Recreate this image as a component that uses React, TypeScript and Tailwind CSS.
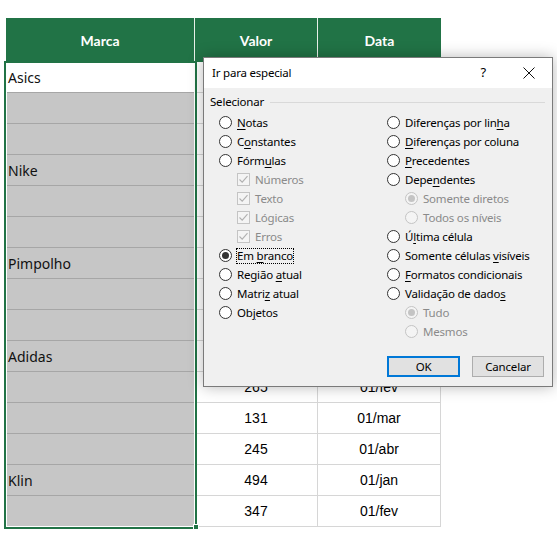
import React from "react";

const marca: Record<number, string> = { 0: "Asics", 3: "Nike", 6: "Pimpolho", 9: "Adidas", 13: "Klin" };
const vals: Record<number, [string, string]> = {
  10: ["265", "01/fev"],
  11: ["131", "01/mar"],
  12: ["245", "01/abr"],
  13: ["494", "01/jan"],
  14: ["347", "01/fev"],
};

function Radio({ checked = false, disabled = false }: { checked?: boolean; disabled?: boolean }) {
  return (
    <span
      className={
        disabled
          ? "flex h-[13px] w-[13px] shrink-0 items-center justify-center rounded-full border border-[#c4c4c4] bg-[#f4f4f4]"
          : "flex h-[13px] w-[13px] shrink-0 items-center justify-center rounded-full border border-[#333333] bg-white"
      }
    >
      {checked && (
        <span className={disabled ? "h-[7px] w-[7px] rounded-full bg-[#c4c4c4]" : "h-[7px] w-[7px] rounded-full bg-[#333333]"} />
      )}
    </span>
  );
}

function Check() {
  return (
    <span className="flex h-[13px] w-[13px] shrink-0 items-center justify-center border border-[#c4c4c4] bg-[#f4f4f4]">
      <svg width="11" height="11" viewBox="0 0 11 11" fill="none">
        <path d="M1.5 5.5 L4.2 8.2 L9.5 2.2" stroke="#b0b0b0" strokeWidth="1.1" />
      </svg>
    </span>
  );
}

function U({ children }: { children: React.ReactNode }) {
  return <span className="underline decoration-1 underline-offset-[2px]">{children}</span>;
}

function Item({
  indent = false,
  kind = "radio",
  checked = false,
  disabled = false,
  focus = false,
  children,
}: {
  indent?: boolean;
  kind?: "radio" | "check";
  checked?: boolean;
  disabled?: boolean;
  focus?: boolean;
  children: React.ReactNode;
}) {
  return (
    <div className={indent ? "flex h-[19px] items-center gap-[4px] pl-[18px]" : "flex h-[19px] items-center gap-[4px]"}>
      {kind === "radio" ? <Radio checked={checked} disabled={disabled} /> : <Check />}
      <span
        className={
          (disabled ? "text-[#8a8a8a] " : "text-black ") +
          (focus ? "border border-dotted border-black leading-[14px]" : "border border-transparent leading-[14px]")
        }
      >
        {children}
      </span>
    </div>
  );
}

export default function App() {
  const rows = Array.from({ length: 15 }, (_, i) => i);
  return (
    <div className="relative h-[534px] w-[557px] overflow-hidden bg-white" style={{ fontFamily: "'Noto Sans', sans-serif" }}>
      {/* Spreadsheet */}
      <div className="ml-[6px] pt-[18px]">
        <div
          className="grid h-[44px] w-[435px] grid-cols-[189px_123px_123px] bg-[#217346] text-[14px] font-bold text-white"
          style={{ fontFamily: "Lato, 'Noto Sans', sans-serif" }}
        >
          <div className="flex items-center justify-center border-r border-[#e8efe9]">Marca</div>
          <div className="flex items-center justify-center border-r border-[#e8efe9]">Valor</div>
          <div className="flex items-center justify-center">Data</div>
        </div>
        {rows.map((i) => (
          <div key={i} className="grid h-[31px] w-[435px] grid-cols-[189px_123px_123px]">
            <div
              className={
                i === 0
                  ? "flex items-center border-b border-[#a6a6a6] bg-white pl-[2px] text-[14px] text-[#111111]"
                  : "flex items-center border-b border-[#a6a6a6] bg-[#c6c6c6] pl-[2px] text-[14px] text-[#111111]"
              }
            >
              {marca[i] ?? ""}
            </div>
            <div
              className="flex items-center justify-center border-b border-r border-[#d6d6d6] text-[14px] text-black"
              style={{ fontFamily: "'Liberation Sans', Arial, sans-serif" }}
            >
              {vals[i]?.[0] ?? ""}
            </div>
            <div
              className="flex items-center justify-center border-b border-r border-[#d6d6d6] text-[14px] text-black"
              style={{ fontFamily: "'Liberation Sans', Arial, sans-serif" }}
            >
              {vals[i]?.[1] ?? ""}
            </div>
          </div>
        ))}
      </div>

      {/* Selection border */}
      <div className="pointer-events-none absolute left-[4px] top-[61px] h-[468px] w-[193px] border-2 border-[#217346]">
        <div className="h-full w-full border border-white" />
      </div>
      <div className="absolute left-[193px] top-[524px] h-[6px] w-[6px] border border-white bg-[#217346]" />

      {/* Dialog */}
      <div className="absolute left-[203px] top-[57px] h-[330px] w-[350px] border border-[#7a7a7a] bg-[#f0f0f0] text-[11.5px] tracking-[-0.2px] text-black shadow-[0_0_14px_rgba(0,0,0,0.28)]">
        <div className="flex h-[30px] items-center bg-white pl-[8px]">
          <span className="flex-1">Ir para especial</span>
          <span className="mr-[37px] text-[13px]">?</span>
          <svg className="mr-[17px]" width="12" height="12" viewBox="0 0 12 12">
            <path d="M0.5 0.5 L11.5 11.5 M11.5 0.5 L0.5 11.5" stroke="#111" strokeWidth="1" />
          </svg>
        </div>
        <div className="px-[6px] pt-[6px]">
          <div className="flex h-[16px] items-center gap-[6px]">
            <span>Selecionar</span>
            <div className="mr-[1px] h-px flex-1 bg-[#d9d9d9]" />
          </div>
          <div className="mt-[3px] grid grid-cols-[168px_1fr] pl-[9px]">
            <div>
              <Item>
                <U>N</U>otas
              </Item>
              <Item>
                C<U>o</U>nstantes
              </Item>
              <Item>
                Fórm<U>u</U>las
              </Item>
              <Item indent kind="check" disabled>
                Números
              </Item>
              <Item indent kind="check" disabled>
                Texto
              </Item>
              <Item indent kind="check" disabled>
                Lógicas
              </Item>
              <Item indent kind="check" disabled>
                Erros
              </Item>
              <Item checked focus>
                Em <U>b</U>ranco
              </Item>
              <Item>
                Região <U>a</U>tual
              </Item>
              <Item>
                Matri<U>z</U> atual
              </Item>
              <Item>
                Ob<U>j</U>etos
              </Item>
            </div>
            <div>
              <Item>
                Diferenças por lin<U>h</U>a
              </Item>
              <Item>
                <U>D</U>iferenças por coluna
              </Item>
              <Item>
                <U>P</U>recedentes
              </Item>
              <Item>
                Depe<U>n</U>dentes
              </Item>
              <Item indent checked disabled>
                Somente diretos
              </Item>
              <Item indent disabled>
                Todos os níveis
              </Item>
              <Item>
                Ú<U>l</U>tima célula
              </Item>
              <Item>
                Somente células <U>v</U>isíveis
              </Item>
              <Item>
                <U>F</U>ormatos condicionais
              </Item>
              <Item>
                Validação de dado<U>s</U>
              </Item>
              <Item indent checked disabled>
                Tudo
              </Item>
              <Item indent disabled>
                Mesmos
              </Item>
            </div>
          </div>
          <div className="mt-[15px] flex gap-[12px] pl-[177px]">
            <button className="flex h-[21px] w-[73px] items-center justify-center border-2 border-[#0078d7] bg-[#e1e1e1] text-black">
              OK
            </button>
            <button className="flex h-[21px] w-[72px] items-center justify-center border border-[#adadad] bg-[#e1e1e1] text-black">
              Cancelar
            </button>
          </div>
        </div>
      </div>
    </div>
  );
}
